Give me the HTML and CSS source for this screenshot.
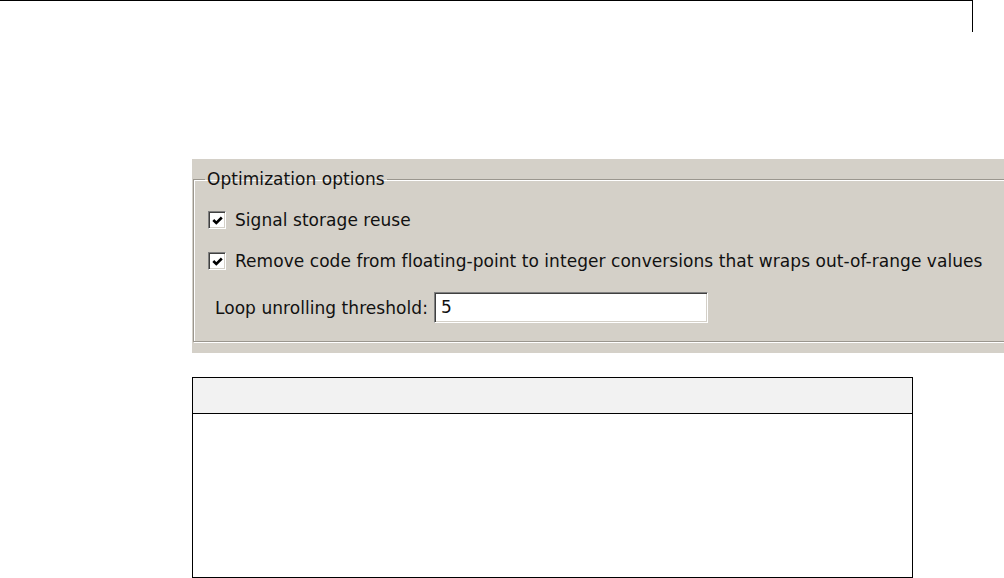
FILE: index.html
```html
<!DOCTYPE html>
<html>
<head>
<meta charset="utf-8">
<link rel="stylesheet" href="styles.css">
</head>
<body>
<div class="topbar"></div>
<div class="panel">
  <fieldset class="group">
    <legend class="legend">Optimization options</legend>
    <div class="row check-row">
      <span class="cb"><svg width="11" height="11" viewBox="0 0 11 11"><path d="M1.3 5 L4.3 8 L9.8 2.5" fill="none" stroke="#000" stroke-width="2.6"/></svg></span>
      <span class="label">Signal storage reuse</span>
    </div>
    <div class="row check-row">
      <span class="cb"><svg width="11" height="11" viewBox="0 0 11 11"><path d="M1.3 5 L4.3 8 L9.8 2.5" fill="none" stroke="#000" stroke-width="2.6"/></svg></span>
      <span class="label">Remove code from floating-point to integer conversions that wraps out-of-range values</span>
    </div>
    <div class="row field-row">
      <span class="label">Loop unrolling threshold:</span>
      <span class="input">5</span>
    </div>
  </fieldset>
</div>
<div class="table">
  <div class="thead"></div>
  <div class="tbody"></div>
</div>
</body>
</html>
```

FILE: styles.css
```css
html, body {
  margin: 0;
  padding: 0;
  background: #fff;
  overflow: hidden;
}
body {
  font-family: "DejaVu Sans", Verdana, sans-serif;
  font-size: 17px;
  letter-spacing: 0.05px;
  color: #111;
}
.topbar {
  width: 972px;
  height: 31px;
  border-top: 1px solid #000;
  border-right: 1px solid #000;
}
.panel {
  margin: 127px 0 0 192px;
  width: 812px;
  height: 194px;
  background: #d4d0c8;
  overflow: hidden;
  padding: 0 0 0 1px;
  box-sizing: border-box;
}
.group {
  margin: 11px 0 0 0;
  width: 840px;
  box-sizing: border-box;
  border: 1px solid #9a968e;
  box-shadow: inset 1px 1px 0 #fff, 1px 1px 0 #fff;
  padding: 18px 0 18px 14px;
  min-width: 0;
}
.legend {
  margin-left: -3px;
  padding: 0 2px;
  line-height: 18px;
}
.row {
  display: flex;
  align-items: center;
}
.check-row {
  height: 28px;
  line-height: 28px;
}
.check-row + .check-row {
  margin-top: 13px;
}
.cb {
  width: 18px;
  height: 18px;
  box-sizing: border-box;
  background: #fff;
  border-top: 1px solid #808080;
  border-left: 1px solid #808080;
  border-bottom: 1px solid #fff;
  border-right: 1px solid #fff;
  box-shadow: inset 1px 1px 0 #404040, inset -1px -1px 0 #d4d0c8;
  display: flex;
  align-items: center;
  justify-content: center;
  margin-right: 9px;
}
.cb svg {
  display: block;
}
.field-row {
  margin-top: 17px;
  padding-left: 7px;
}
.input {
  margin-left: 6px;
  width: 274px;
  height: 31px;
  box-sizing: border-box;
  background: #fff;
  border-top: 1px solid #808080;
  border-left: 1px solid #808080;
  border-bottom: 1px solid #fff;
  border-right: 1px solid #fff;
  box-shadow: inset 1px 1px 0 #404040, inset -1px -1px 0 #d4d0c8;
  padding-left: 6px;
  line-height: 29px;
}
.table {
  margin: 24px 0 0 192px;
  width: 721px;
  height: 201px;
  box-sizing: border-box;
  border: 1px solid #000;
}
.thead {
  height: 36px;
  box-sizing: border-box;
  background: #f2f2f2;
  border-bottom: 1px solid #000;
}
```
